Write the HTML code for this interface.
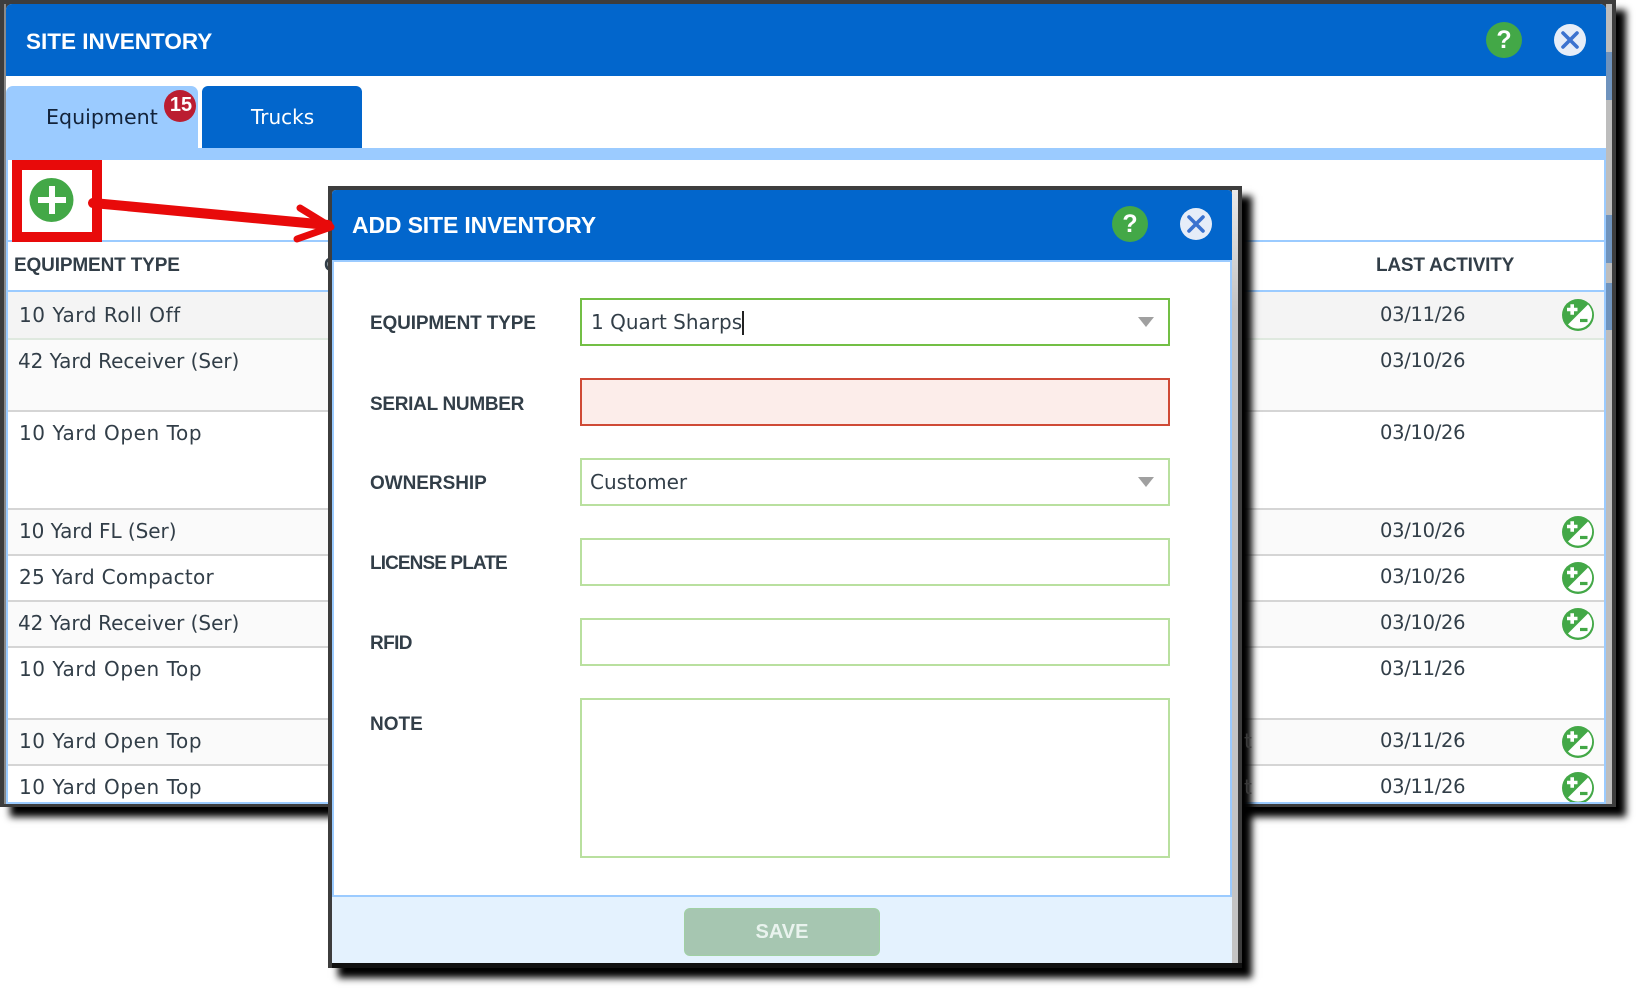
<!DOCTYPE html>
<html><head><meta charset="utf-8"><title>Site Inventory</title>
<style>
html,body{margin:0;padding:0;background:#fff}
body{width:1636px;height:988px;position:relative;overflow:hidden;font-family:"DejaVu Sans",sans-serif;color:#323e48}
div,span,svg{position:absolute;box-sizing:border-box}
.t{white-space:nowrap;line-height:24px;font-size:20px}
.d{font-size:19.5px;letter-spacing:-.3px;left:1380px}
.ot{letter-spacing:.57px}
.b{font-family:"Liberation Sans",sans-serif;font-weight:bold;white-space:nowrap;line-height:24px}
.lbl{font-size:19px;letter-spacing:-.3px;left:370px;color:#323e48}
.th{font-size:19px;letter-spacing:-.15px;color:#323e48}
.r{left:8px;width:1596px;border-bottom:2px solid #d5d5d5}
.f{left:580px;width:590px;height:48px;border:2px solid #b9e09f;background:#fff}
</style></head><body>

<!-- MAIN WINDOW -->
<div style="left:0;top:0;width:1616px;height:807px;background:#3d3d3d;box-shadow:10px 10px 7px #000"></div>
<div style="left:4px;top:4px;width:2px;height:800px;background:#8a8a8a"></div>
<div style="left:1606px;top:4px;width:6px;height:800px;background:#bdbdbd"></div>
<div style="left:1606px;top:52px;width:6px;height:48px;background:#6f93bd"></div>
<div style="left:1606px;top:215px;width:6px;height:48px;background:#6f93bd"></div>
<div style="left:1606px;top:283px;width:6px;height:47px;background:#6f93bd"></div>
<div style="left:6px;top:4px;width:1600px;height:800px;background:#fff;border-radius:6px"></div>
<div style="left:6px;top:4px;width:1600px;height:72px;background:#0266cc;border-radius:6px 6px 0 0"></div>
<div class="b" style="left:26px;top:30px;font-size:22.5px;color:#fff">SITE INVENTORY</div>

<svg style="left:1485px;top:21px" width="38" height="38"><circle cx="19" cy="19" r="18" fill="#43a847"/><text x="19" y="27" text-anchor="middle" font-family="Liberation Sans" font-weight="bold" font-size="25" fill="#fff">?</text></svg>
<svg style="left:1553px;top:23px" width="34" height="34"><circle cx="17" cy="17" r="16" fill="#e6edf8"/><path d="M10 10L24 24M24 10L10 24" stroke="#3b72cf" stroke-width="3.6" stroke-linecap="round"/></svg>

<!-- tabs -->
<div style="left:6px;top:86px;width:192px;height:62px;background:#9bcbff;border-radius:7px 7px 0 0"></div>
<div class="t" style="left:46px;top:105px;font-size:20.6px;color:#13233a">Equipment</div>
<div style="left:164px;top:90px;width:32px;height:32px;border-radius:50%;background:#bb1d31"></div>
<div class="b" style="left:165px;top:93px;width:32px;text-align:center;font-size:20px;color:#fff">15</div>
<div style="left:202px;top:86px;width:160px;height:62px;background:#0266cc;border-radius:6px 6px 0 0"></div>
<div class="t" style="left:251px;top:105px;font-size:20px;color:#fff">Trucks</div>
<div style="left:6px;top:148px;width:1600px;height:12px;background:#9bcbff"></div>

<!-- panel borders -->
<div style="left:6px;top:160px;width:2px;height:644px;background:#9bcbff"></div>
<div style="left:1604px;top:160px;width:2px;height:644px;background:#9bcbff"></div>
<div style="left:8px;top:240px;width:1596px;height:2px;background:#9bcbff"></div>
<div style="left:8px;top:290px;width:1596px;height:2px;background:#9bcbff"></div>

<div class="b th" style="left:14px;top:254px">EQUIPMENT TYPE</div>
<div class="b th" style="left:324px;top:254px">C</div>
<div class="b th" style="left:1376px;top:254px;letter-spacing:-.2px">LAST ACTIVITY</div>

<!-- rows -->
<div class="r" style="top:292px;height:48px;background:#f4f4f4;border-bottom-color:#dfe9df"></div>
<div class="r" style="top:340px;height:72px;background:#fafafa"></div>
<div class="r" style="top:412px;height:98px;background:#fff"></div>
<div class="r" style="top:510px;height:46px;background:#fafafa"></div>
<div class="r" style="top:556px;height:46px;background:#fff"></div>
<div class="r" style="top:602px;height:46px;background:#fafafa"></div>
<div class="r" style="top:648px;height:72px;background:#fff"></div>
<div class="r" style="top:720px;height:46px;background:#fafafa"></div>
<div style="left:6px;top:802px;width:1600px;height:2px;background:#9bcbff;border-radius:0 0 5px 5px"></div>

<div class="t" style="left:19px;top:303px;letter-spacing:.55px">10 Yard Roll Off</div>
<div class="t" style="left:18px;top:349px;letter-spacing:-.04px">42 Yard Receiver (Ser)</div>
<div class="t ot" style="left:19px;top:421px">10 Yard Open Top</div>
<div class="t" style="left:19px;top:519px;letter-spacing:-.05px">10 Yard FL (Ser)</div>
<div class="t" style="left:19px;top:565px;letter-spacing:.27px">25 Yard Compactor</div>
<div class="t" style="left:18px;top:611px;letter-spacing:-.04px">42 Yard Receiver (Ser)</div>
<div class="t ot" style="left:19px;top:657px">10 Yard Open Top</div>
<div class="t ot" style="left:19px;top:729px">10 Yard Open Top</div>
<div class="t ot" style="left:19px;top:775px">10 Yard Open Top</div>

<div class="t d" style="top:303px">03/11/26</div>
<div class="t d" style="top:349px">03/10/26</div>
<div class="t d" style="top:421px">03/10/26</div>
<div class="t d" style="top:519px">03/10/26</div>
<div class="t d" style="top:565px">03/10/26</div>
<div class="t d" style="top:611px">03/10/26</div>
<div class="t d" style="top:657px">03/11/26</div>
<div class="t d" style="top:729px">03/11/26</div>
<div class="t d" style="top:775px">03/11/26</div>

<svg width="0" height="0" style="left:0;top:0"><defs><g id="pm"><circle cx="16" cy="16" r="16" fill="#43a847"/><path d="M6 25.5L26 5.5A13.5 13.5 0 0 1 6 25.5Z" fill="#fff"/><path d="M5 10.5h10.5M10.2 5.2v10.6" stroke="#fff" stroke-width="3.6"/><path d="M18 21.5h7.5" stroke="#43a847" stroke-width="3.2"/></g></defs></svg>
<svg style="left:1562px;top:299px" width="32" height="32"><use href="#pm"/></svg>
<svg style="left:1562px;top:516px" width="32" height="32"><use href="#pm"/></svg>
<svg style="left:1562px;top:562px" width="32" height="32"><use href="#pm"/></svg>
<svg style="left:1562px;top:608px" width="32" height="32"><use href="#pm"/></svg>
<svg style="left:1562px;top:726px" width="32" height="32"><use href="#pm"/></svg>
<svg style="left:1562px;top:772px" width="32" height="30"><use href="#pm"/></svg>

<!-- red highlight box + plus -->
<div style="left:12px;top:160px;width:90px;height:82px;border:10px solid #e80a0a;background:#fff"></div>
<svg style="left:29px;top:177px" width="46" height="46"><circle cx="22.5" cy="23" r="22" fill="#43a847"/><rect x="9" y="20" width="28" height="6" fill="#fff"/><rect x="20" y="9" width="6" height="28" fill="#fff"/></svg>

<!-- MODAL -->
<div style="left:328px;top:186px;width:914px;height:782px;background:#3d3d3d;box-shadow:10px 10px 7px #000"></div>
<div class="t" style="left:1244px;top:729px;color:#3a3a3a">t</div>
<div class="t" style="left:1244px;top:775px;color:#3a3a3a">t</div>
<div style="left:1232px;top:190px;width:6px;height:773px;background:linear-gradient(#e8e8e8,#c4c4c4 120px)"></div>
<div style="left:332px;top:190px;width:900px;height:773px;background:#fff;border-radius:4px 4px 0 0"></div>
<div style="left:332px;top:963px;width:910px;height:5px;background:#111"></div>
<div style="left:332px;top:190px;width:900px;height:70px;background:#0266cc;border-radius:4px 4px 0 0"></div>
<div style="left:332px;top:260px;width:900px;height:2px;background:#9bcbff"></div>
<div style="left:332px;top:262px;width:2px;height:633px;background:#9bcbff"></div>
<div style="left:1230px;top:262px;width:2px;height:633px;background:#9bcbff"></div>
<div style="left:332px;top:895px;width:900px;height:68px;background:#e4f2fe;border-top:2px solid #9bcbff"></div>

<div class="b" style="left:352px;top:213px;font-size:23px;letter-spacing:-.15px;color:#fff">ADD SITE INVENTORY</div>
<svg style="left:1112px;top:206px" width="36" height="36"><circle cx="18" cy="18" r="18" fill="#43a847"/><text x="18" y="26" text-anchor="middle" font-family="Liberation Sans" font-weight="bold" font-size="25" fill="#fff">?</text></svg>
<svg style="left:1180px;top:208px" width="32" height="32"><circle cx="16" cy="16" r="16" fill="#e6edf8"/><path d="M9 9L23 23M23 9L9 23" stroke="#3b72cf" stroke-width="3.6" stroke-linecap="round"/></svg>

<div class="b lbl" style="top:312px;letter-spacing:-.15px">EQUIPMENT TYPE</div>
<div class="b lbl" style="top:392.5px">SERIAL NUMBER</div>
<div class="b lbl" style="top:472px;letter-spacing:-.05px">OWNERSHIP</div>
<div class="b lbl" style="top:552px;letter-spacing:-.9px">LICENSE PLATE</div>
<div class="b lbl" style="top:632px;letter-spacing:-.6px">RFID</div>
<div class="b lbl" style="top:713px;letter-spacing:0">NOTE</div>

<div class="f" style="top:298px;border-color:#73bf45"></div>
<div class="t" style="left:591px;top:310px">1 Quart Sharps</div>
<div style="left:742px;top:311px;width:1.5px;height:24px;background:#222"></div>
<svg style="left:1138px;top:317px" width="16" height="10"><path d="M0 0H16L8 10Z" fill="#a0a0a0"/></svg>

<div class="f" style="top:378px;border-color:#cf4a36;background:#fcedea"></div>

<div class="f" style="top:458px"></div>
<div class="t" style="left:590px;top:470px">Customer</div>
<svg style="left:1138px;top:477px" width="16" height="10"><path d="M0 0H16L8 10Z" fill="#a0a0a0"/></svg>

<div class="f" style="top:538px"></div>
<div class="f" style="top:618px"></div>
<div class="f" style="top:698px;height:160px"></div>

<div style="left:684px;top:908px;width:196px;height:48px;background:#a6c6b1;border:1px solid #a0d0a4;border-radius:6px"></div>
<div class="b" style="left:684px;top:920px;width:196px;text-align:center;font-size:20px;color:#e9f3ee">SAVE</div>

<!-- arrow -->
<svg style="left:0;top:0" width="400" height="300">
<path d="M93 203L328 225" stroke="#e80a0a" stroke-width="10" stroke-linecap="round" fill="none"/>
<path d="M300 208L331 227L297 239" stroke="#e80a0a" stroke-width="7" stroke-linecap="round" stroke-linejoin="round" fill="none"/>
</svg>
</body></html>
